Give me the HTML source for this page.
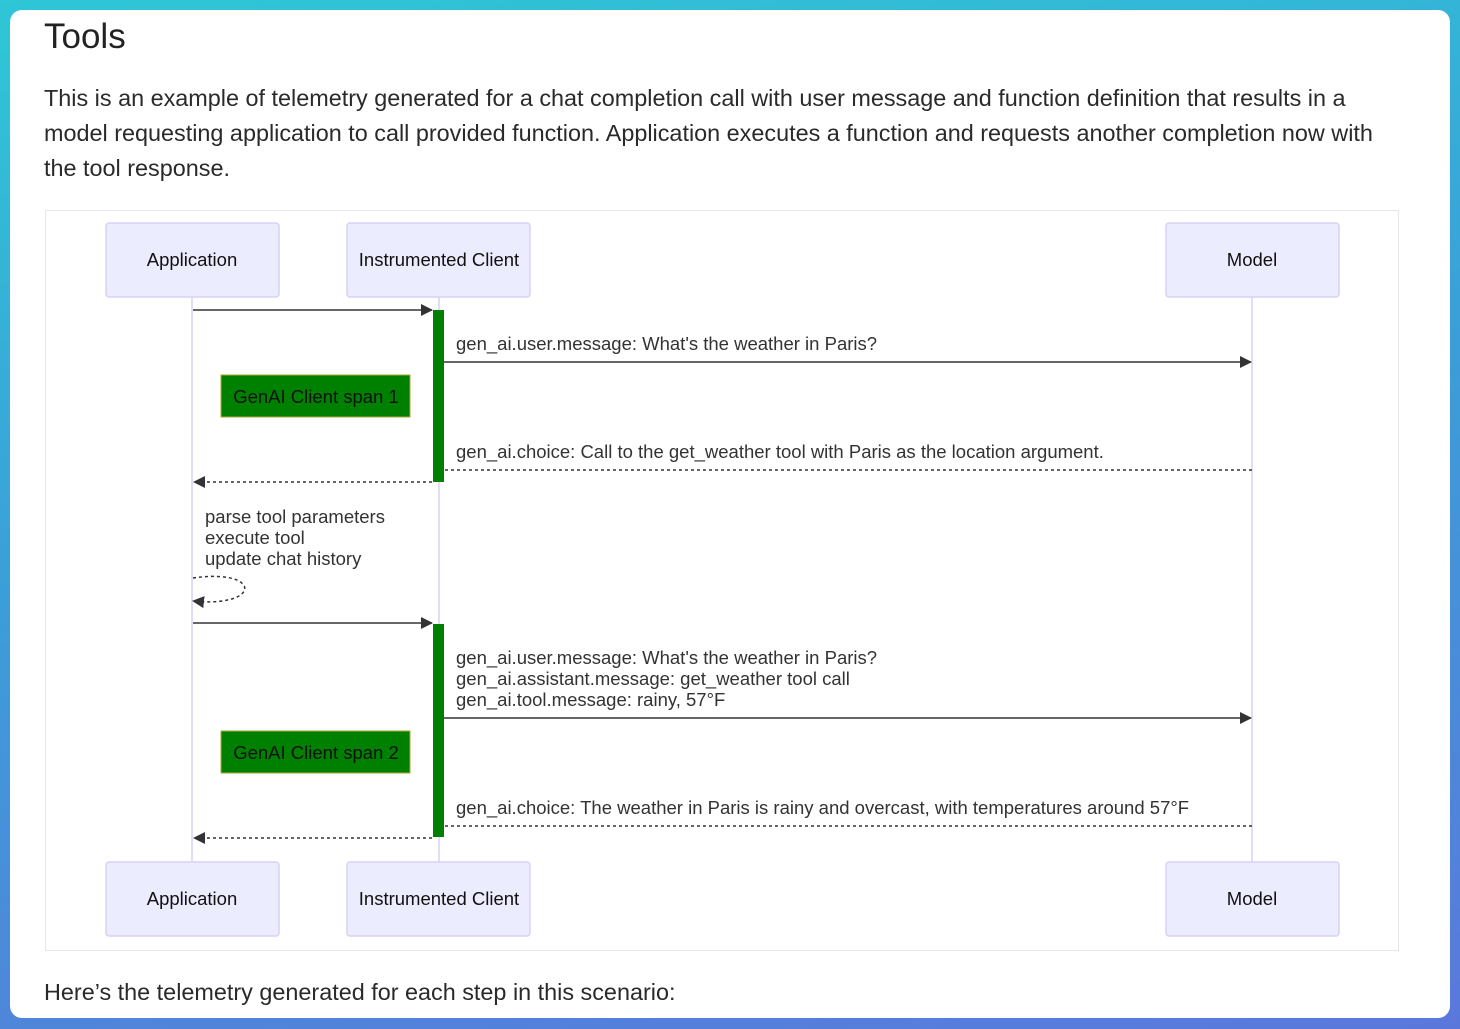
<!DOCTYPE html>
<html><head><meta charset="utf-8"><style>
html,body{margin:0;padding:0}
body{width:1460px;height:1029px;overflow:hidden;background:linear-gradient(170deg,#2ec7d6 0%,#3b9fd8 45%,#5a78dc 100%);font-family:"Liberation Sans",sans-serif;position:relative}
.card{position:absolute;left:10px;top:10px;width:1440px;height:1008px;background:#fff;border-radius:12px;overflow:hidden}
h1{position:absolute;left:34px;top:7px;margin:0;font-size:35px;font-weight:400;color:#222}
p{position:absolute;left:34px;margin:0;font-size:23.4px;line-height:35px;color:#2a2a2a}
svg{position:absolute;left:0;top:0}
svg text{font-family:"Liberation Sans",sans-serif;fill:#333;font-size:18.5px}
</style></head><body>
<div class="card">
<h1>Tools</h1>
<p style="top:71px;width:1350px">This is an example of telemetry generated for a chat completion call with user message and function definition that results in a model requesting application to call provided function. Application executes a function and requests another completion now with the tool response.</p>
<p style="top:965px">Here’s the telemetry generated for each step in this scenario:</p>
</div>
<svg width="1460" height="1029">
<defs><marker id="a" markerWidth="12" markerHeight="12" refX="11" refY="6" orient="auto" markerUnits="userSpaceOnUse"><path d="M0,0 L12,6 L0,12 z" fill="#333"/></marker></defs>
<rect x="45.5" y="210.5" width="1353" height="740" fill="#fff" stroke="#e3e6ec"/>
<g stroke="#d9d0f5" stroke-width="1.5"><line x1="192" y1="297" x2="192" y2="862"/><line x1="439" y1="297" x2="439" y2="862"/><line x1="1252" y1="297" x2="1252" y2="862"/></g>
<g fill="#ececff" stroke="#d9d0f5" stroke-width="1.5">
<rect x="106" y="223" width="173" height="74" rx="3"/><rect x="347" y="223" width="183" height="74" rx="3"/><rect x="1166" y="223" width="173" height="74" rx="3"/>
<rect x="106" y="862" width="173" height="74" rx="3"/><rect x="347" y="862" width="183" height="74" rx="3"/><rect x="1166" y="862" width="173" height="74" rx="3"/>
</g>
<g text-anchor="middle" style="fill:#111"><text x="192" y="266" style="fill:#111">Application</text><text x="439" y="266" style="fill:#111">Instrumented Client</text><text x="1252" y="266" style="fill:#111">Model</text>
<text x="192" y="905" style="fill:#111">Application</text><text x="439" y="905" style="fill:#111">Instrumented Client</text><text x="1252" y="905" style="fill:#111">Model</text></g>
<rect x="433" y="310" width="11" height="172" fill="#008000"/>
<rect x="433" y="624" width="11" height="213" fill="#008000"/>
<g stroke="#333" stroke-width="1.5" fill="none">
<line x1="193" y1="310" x2="432" y2="310" marker-end="url(#a)"/>
<line x1="444" y1="362" x2="1251" y2="362" marker-end="url(#a)"/>
<line x1="1252" y1="470" x2="444" y2="470" stroke-dasharray="3,3"/>
<line x1="432" y1="482" x2="194" y2="482" stroke-dasharray="3,3" marker-end="url(#a)"/>
<path d="M193,578 C262,568 262,608 193,601" stroke-dasharray="3,3" marker-end="url(#a)"/>
<line x1="193" y1="623" x2="432" y2="623" marker-end="url(#a)"/>
<line x1="444" y1="718" x2="1251" y2="718" marker-end="url(#a)"/>
<line x1="1252" y1="826" x2="444" y2="826" stroke-dasharray="3,3"/>
<line x1="432" y1="838" x2="194" y2="838" stroke-dasharray="3,3" marker-end="url(#a)"/>
</g>
<rect x="221" y="375" width="189" height="42" fill="#008000" stroke="#aaaa33"/>
<text x="316" y="403" text-anchor="middle" style="fill:#111">GenAI Client span 1</text>
<rect x="221" y="731" width="189" height="42" fill="#008000" stroke="#aaaa33"/>
<text x="316" y="759" text-anchor="middle" style="fill:#111">GenAI Client span 2</text>
<text x="456" y="350">gen_ai.user.message: What's the weather in Paris?</text>
<text x="456" y="458">gen_ai.choice: Call to the get_weather tool with Paris as the location argument.</text>
<text x="205" y="523">parse tool parameters</text>
<text x="205" y="544">execute tool</text>
<text x="205" y="565">update chat history</text>
<text x="456" y="664">gen_ai.user.message: What's the weather in Paris?</text>
<text x="456" y="685">gen_ai.assistant.message: get_weather tool call</text>
<text x="456" y="706">gen_ai.tool.message: rainy, 57°F</text>
<text x="456" y="814">gen_ai.choice: The weather in Paris is rainy and overcast, with temperatures around 57°F</text>
</svg>
</body></html>
